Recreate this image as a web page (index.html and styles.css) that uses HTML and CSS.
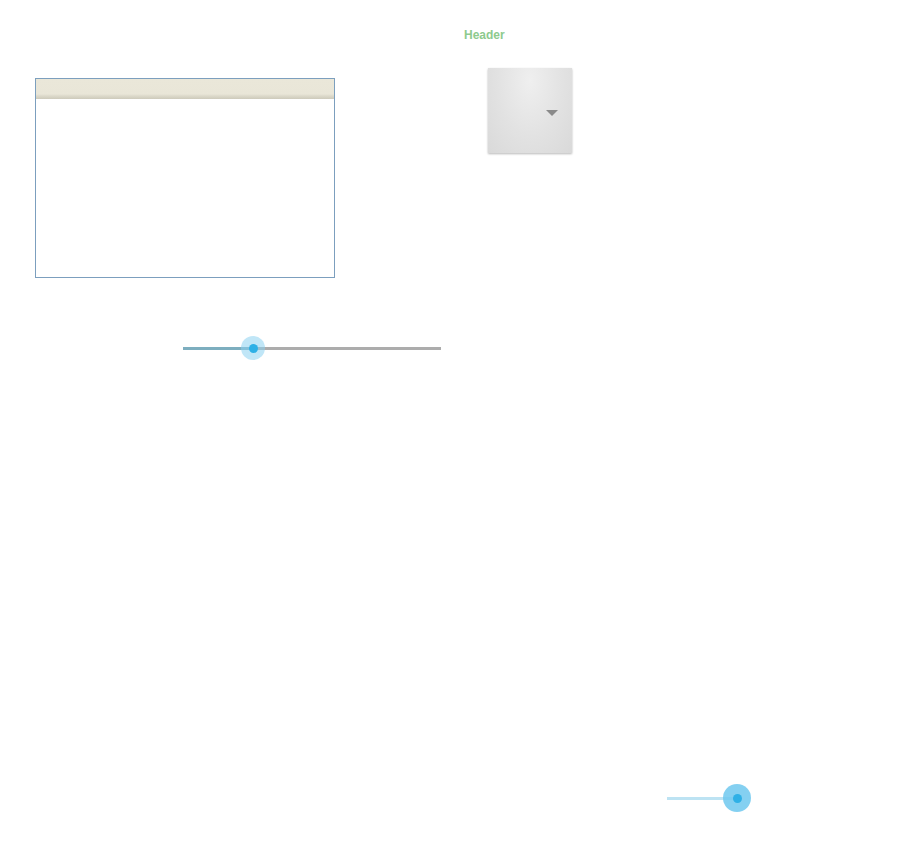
FILE: index.html
```html
<!DOCTYPE html>
<html>
<head>
<meta charset="utf-8">
<link rel="stylesheet" href="styles.css">
</head>
<body>
<div class="page">
  <div class="top">
    <div class="left">
      <div class="panel">
        <div class="panel-head"></div>
      </div>
      <div class="slider slider-one">
        <div class="track"><div class="fill"></div></div>
        <div class="thumb"><div class="dot"></div></div>
      </div>
    </div>
    <div class="right">
      <div class="header-label">Header</div>
      <div class="dropdown"><span class="caret"></span></div>
    </div>
  </div>
  <div class="bottom">
    <div class="slider slider-two">
      <div class="track"></div>
      <div class="thumb"><div class="dot"></div></div>
    </div>
  </div>
</div>
</body>
</html>
```
FILE: styles.css
```css
html, body {
  margin: 0;
  padding: 0;
  background: #ffffff;
  font-family: "Liberation Sans", Arial, sans-serif;
}
.page {
  width: 900px;
  height: 850px;
}
.top {
  display: flex;
  align-items: flex-start;
  padding-left: 35px;
  gap: 23px;
}
.left {
  width: 406px;
  padding-top: 78px;
}
.panel {
  width: 300px;
  height: 200px;
  box-sizing: border-box;
  border: 1px solid #7c9fbe;
  background: #fff;
}
.panel-head {
  height: 20px;
  background: linear-gradient(to bottom, #eae7d9 0, #e9e6d8 75%, #dcd9ca 85%, #cdcabb 100%);
}
.slider {
  position: relative;
  height: 24px;
}
.slider-one {
  margin-top: 58px;
  margin-left: 148px;
  width: 258px;
}
.slider-one .track {
  position: absolute;
  left: 0;
  right: 0;
  top: 11px;
  height: 3px;
  background: #acacac;
}
.slider-one .fill {
  width: 70px;
  height: 100%;
  background: #7daebf;
}
.slider-one .thumb {
  position: absolute;
  left: 58px;
  top: 0;
  width: 24px;
  height: 24px;
  border-radius: 50%;
  background: rgba(140, 210, 240, 0.55);
  display: flex;
  align-items: center;
  justify-content: center;
}
.dot {
  width: 9px;
  height: 9px;
  border-radius: 50%;
  background: #2eb0e6;
}
.right {
  display: flex;
  flex-direction: column;
  align-items: flex-start;
}
.header-label {
  margin-top: 28px;
  font-size: 12px;
  line-height: 14px;
  font-weight: bold;
  color: #8dca8d;
}
.dropdown {
  position: relative;
  margin-top: 26px;
  margin-left: 24px;
  width: 84px;
  height: 85px;
  box-sizing: border-box;
  background: radial-gradient(ellipse at 50% 15%, #efefef 0%, #e2e2e2 55%, #d9d9d9 100%);
  box-shadow: 0 1px 2px rgba(0, 0, 0, 0.28);
}
.caret {
  position: absolute;
  left: 58px;
  top: 42px;
  width: 0;
  height: 0;
  border-left: 6px solid transparent;
  border-right: 6px solid transparent;
  border-top: 6px solid #8a8a8a;
}
.bottom {
  margin-top: 424px;
  padding-left: 667px;
}
.slider-two {
  width: 84px;
  height: 28px;
}
.slider-two .track {
  position: absolute;
  left: 0;
  width: 70px;
  top: 13px;
  height: 3px;
  background: #bde3f3;
}
.slider-two .thumb {
  position: absolute;
  left: 56px;
  top: 0;
  width: 28px;
  height: 28px;
  border-radius: 50%;
  background: rgba(110, 200, 238, 0.85);
  display: flex;
  align-items: center;
  justify-content: center;
}
```
